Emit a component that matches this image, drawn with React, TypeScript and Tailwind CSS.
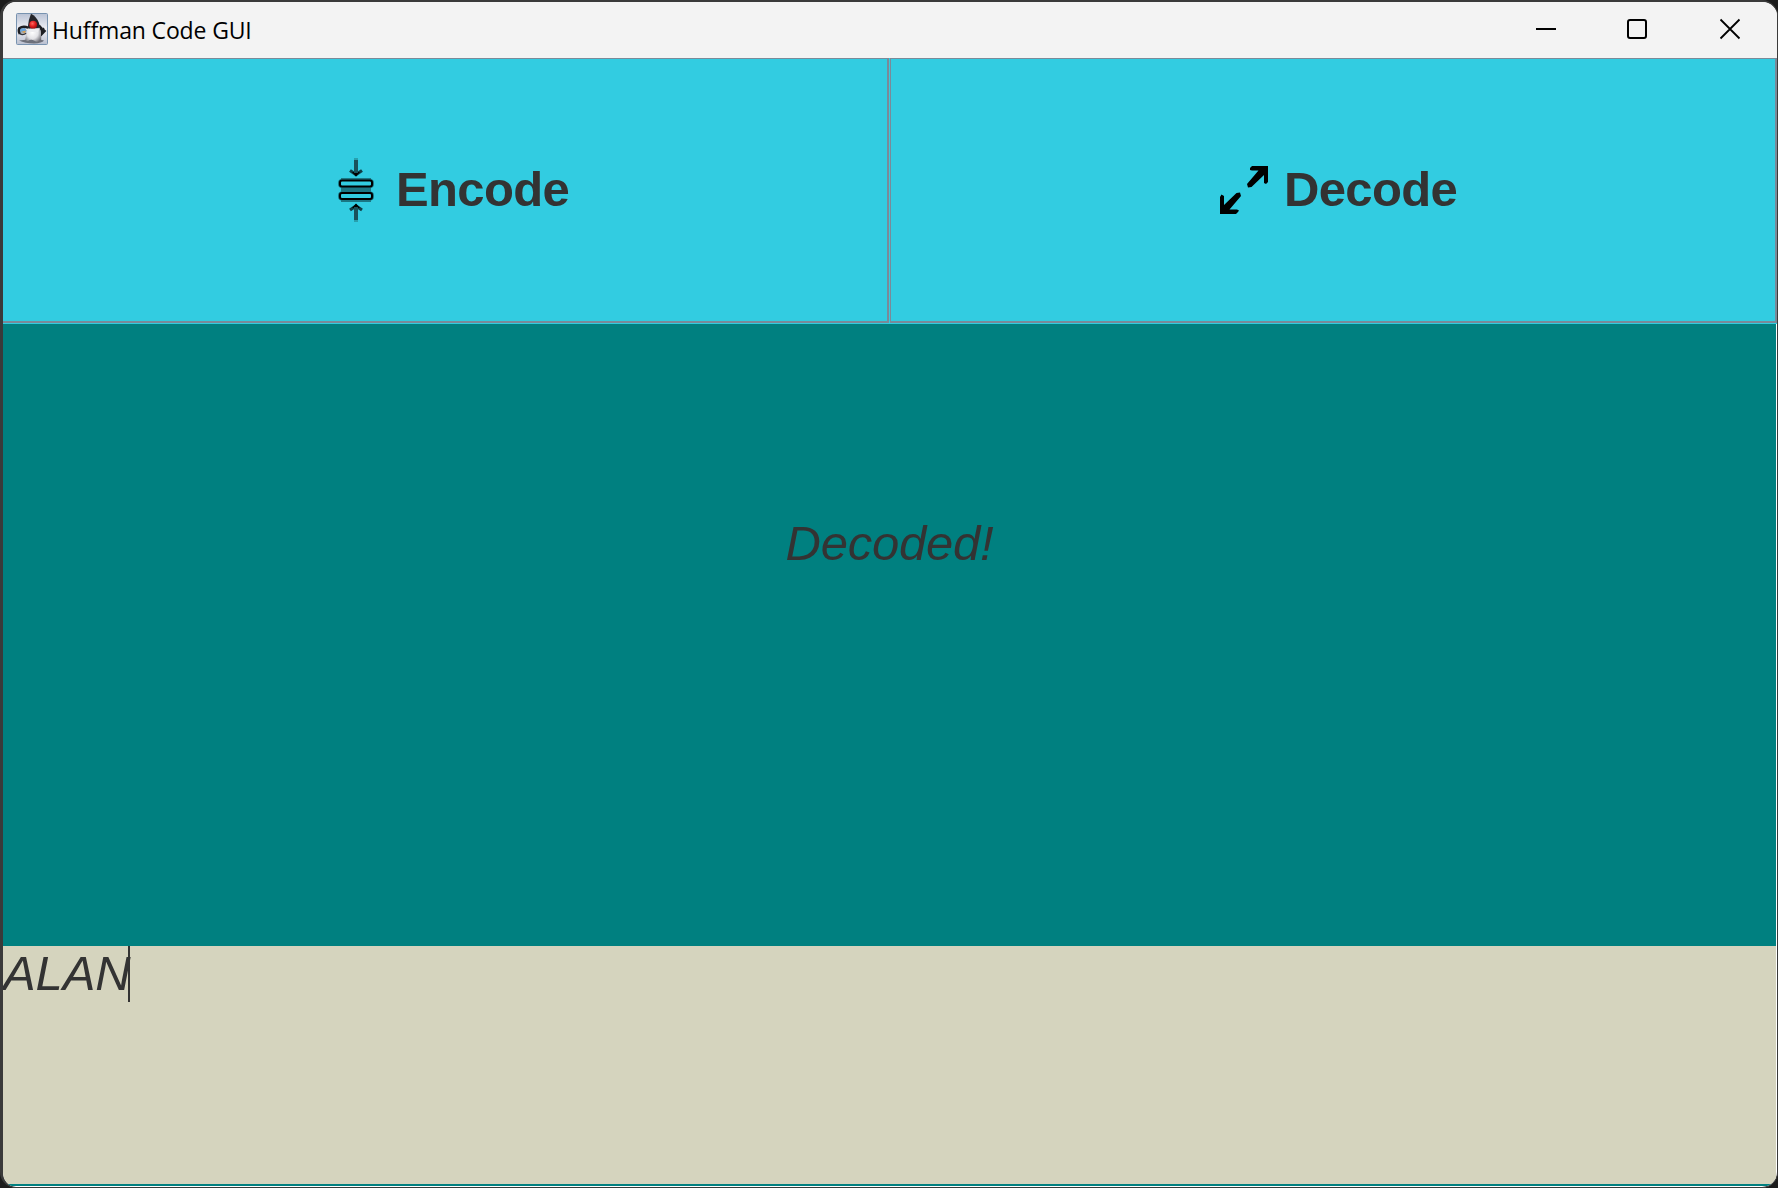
import type { ReactNode } from "react";

function DukeIcon() {
  return (
    <svg width="32" height="32" viewBox="0 0 32 32" className="block">
      <defs>
        <linearGradient id="tile" x1="0" y1="0" x2="0" y2="1">
          <stop offset="0" stopColor="#b9c2d4" />
          <stop offset="0.5" stopColor="#eff0f6" />
          <stop offset="1" stopColor="#b9bfcf" />
        </linearGradient>
        <radialGradient id="belly" cx="0.45" cy="0.45" r="0.65">
          <stop offset="0" stopColor="#ffffff" />
          <stop offset="0.55" stopColor="#e2e2e6" />
          <stop offset="1" stopColor="#6d6d75" />
        </radialGradient>
        <radialGradient id="nose" cx="0.4" cy="0.35" r="0.7">
          <stop offset="0" stopColor="#ff6a60" />
          <stop offset="0.5" stopColor="#e32222" />
          <stop offset="1" stopColor="#9a0808" />
        </radialGradient>
      </defs>
      <rect x="0.5" y="0.5" width="31" height="31" rx="1" fill="url(#tile)" stroke="#7893b0" />
      <path d="M3 27.5Q9 30.5 18 30.5Q26 30 28 27.5Q24 25.5 16 26Z" fill="#50535c" opacity="0.75" />
      <path d="M4 15.5L9 15L11 18L8.5 20L3.5 19.5Z" fill="#6ba4da" />
      <path d="M4.5 19L9 20L10 17.5Z" fill="#e0a04c" />
      <path d="M12.5 14.8Q7 12.5 3.3 15.3Q2 18 3.8 21" fill="none" stroke="#1c1d22" strokeWidth="2.4" />
      <path d="M3.8 20.6Q7 22.5 10.5 20" fill="none" stroke="#33353c" strokeWidth="1.5" />
      <path d="M22 12.5Q26 14 26.3 20.2L29.3 17" fill="none" stroke="#1c1d22" strokeWidth="2.8" />
      <path d="M26 20.5L27.5 14.8" stroke="#1c1d22" strokeWidth="2" />
      <path d="M13 12Q10.8 17 9.3 26.5Q9.8 28.8 12 28Q15 25.5 18 27.6Q21.5 30 24.3 28.6Q25.8 27 24.8 21Q24 14.5 21.8 11.5Z" fill="url(#belly)" />
      <path d="M15 0.8Q20.3 3.2 23 10L23.8 14.5Q18 17 11.6 15.2Q12.2 7 15 0.8Z" fill="#25252a" />
      <path d="M12.5 16.2Q17 14.4 23.3 15.8L22 19H13Z" fill="#ededf0" />
      <circle cx="17.2" cy="11.7" r="3.9" fill="url(#nose)" />
    </svg>
  );
}

function CompressIcon() {
  return (
    <svg width="64" height="64" viewBox="0 0 64 64" className="block">
      <path d="M30 0h4v2h-4zM30 62h4v2h-4z" fill="#28a0ae" />
      <path d="M26 12.5l6 4l6-4M26 52l6-4l6 4" fill="none" stroke="#0f3d45" strokeWidth="3.2" />
      <path d="M28 14h8L32 18.5zM28 50h8L32 45.5z" fill="#000" />
      <path d="M30 2h4v13h-4zM30 49h4v13h-4z" fill="#1a525b" />
      <path d="M17 20h30v2H17zM17 42h30v2H17zM17 29h30v6H17z" fill="#1b7784" />
      <g fill="none" stroke="#1b7784" strokeWidth="3">
        <rect x="15.5" y="22.5" width="33" height="6" rx="2.5" />
        <rect x="15.5" y="35" width="33" height="6" rx="2.5" />
      </g>
      <g fill="#32cce1" stroke="#000" strokeWidth="2">
        <rect x="16" y="22.5" width="32" height="6" rx="2" />
        <rect x="16" y="35" width="32" height="6" rx="2" />
      </g>
    </svg>
  );
}

function ExpandIcon() {
  return (
    <svg width="64" height="64" viewBox="0 0 64 64" className="block">
      <path d="M42 10L44 8H60V24L58 26L56 25V17L43.5 29L40 29.5L39 26L50.5 12.5H44L42 12Z" fill="#000" />
      <path d="M30 54L28 56H12V39L13.5 36.5L16 38V47L28.5 35L32 34.5L33 38L21.5 51.5H29L31 52.5Z" fill="#000" />
    </svg>
  );
}

function ActionButton({ icon, label, className }: { icon: ReactNode; label: string; className: string }) {
  return (
    <button
      className={`flex h-[265px] items-center border-t border-b-2 border-[#7a8a99] bg-[#32cce1] text-[49px] leading-[56px] font-bold tracking-[-0.65px] text-[#333333] ${className}`}
    >
      {icon}
      <span className="pb-0.5">{label}</span>
    </button>
  );
}

export default function App() {
  return (
    <div className="h-[1188px] w-[1778px] overflow-hidden bg-[#1c1c1c] font-['Liberation_Sans',Arial,sans-serif] text-[#333333]">
      <div className="flex h-full w-full flex-col overflow-hidden rounded-[16px] border-t-2 border-r border-b border-l-3 border-[#3a3a3a] bg-white">
        <header className="flex h-14 shrink-0 items-center bg-[#f3f3f3] text-black">
          <div className="mt-[-2px] ml-[13px]">
            <DukeIcon />
          </div>
          <h1 className="ml-1 flex-1 font-['Open_Sans',sans-serif] text-[23px] leading-8 font-normal tracking-[-0.14px]">
            Huffman Code GUI
          </h1>
          <svg width="278" height="56" viewBox="1500 2 278 56" fill="none" stroke="#000" strokeWidth="2" className="-mr-px block">
            <path d="M1536 29H1556" />
            <rect x="1628" y="20" width="18" height="18" rx="2" />
            <path d="M1720.5 19.5L1739.5 38.5M1739.5 19.5L1720.5 38.5" strokeWidth="1.8" />
          </svg>
        </header>
        <div className="flex shrink-0 border-b border-[#32cce1] bg-[#32cce1]">
          <ActionButton icon={<CompressIcon />} label="Encode" className="mr-px w-[886px] gap-2 border-r-2 pl-[321px]" />
          <ActionButton icon={<ExpandIcon />} label="Decode" className="w-[887px] gap-3 border-r-2 border-l pl-[317px]" />
        </div>
        <main className="flex min-h-0 flex-1 flex-col pr-px pb-px">
          <div className="flex h-[622px] shrink-0 justify-center bg-[#008080] pt-[191px] text-[49px] leading-[56px] tracking-[-0.25px] italic">
            Decoded!
          </div>
          <div className="flex h-[238px] shrink-0 items-start bg-[#d5d4be] text-[49px] leading-[54px] italic">
            <span className="w-[125px] whitespace-nowrap tracking-[-0.15px]">ALAN</span>
            <span className="h-14 w-0.5 bg-[#333333]" />
          </div>
          <div className="h-0.5 shrink-0 bg-[#008080]" />
        </main>
      </div>
    </div>
  );
}
